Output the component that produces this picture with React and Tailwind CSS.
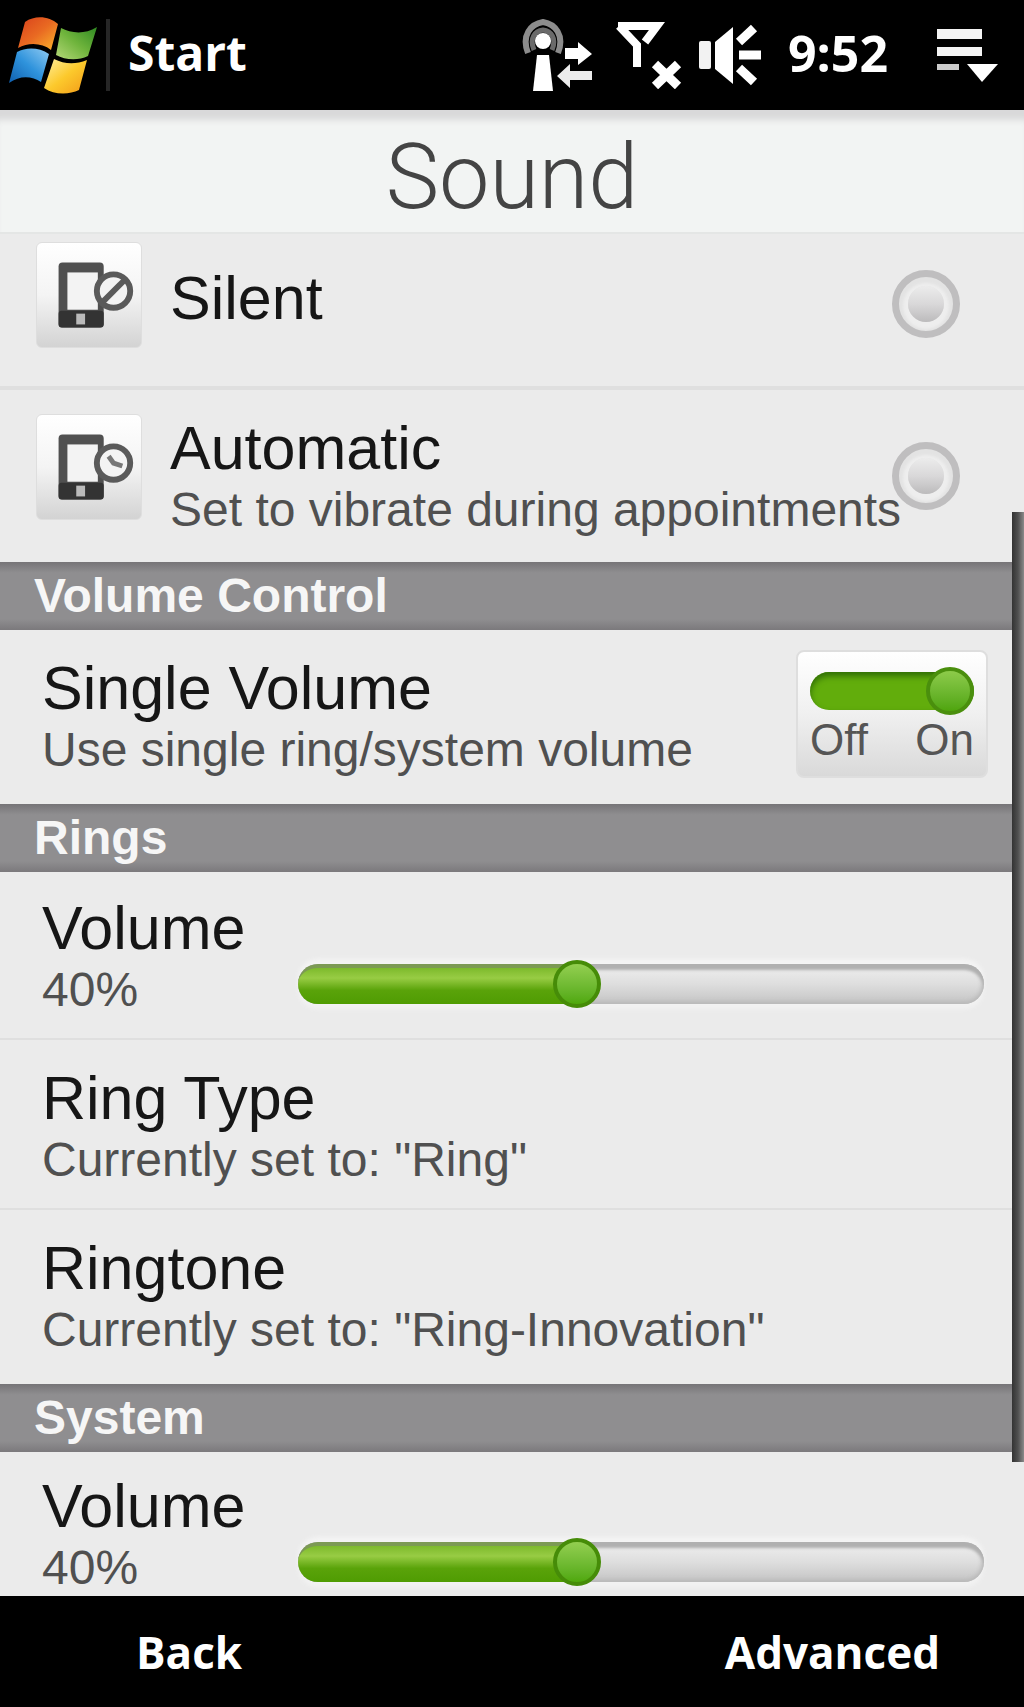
import { useState } from 'react'

function WindowsFlag() {
  return (
    <svg viewBox="0 0 92 84" className="w-[92px] h-[84px]" aria-hidden="true">
      <defs>
        <linearGradient id="flagRed" x1="0" y1="0" x2="1" y2="1">
          <stop offset="0" stopColor="#d8401c" />
          <stop offset="0.5" stopColor="#e96a22" />
          <stop offset="1" stopColor="#fbb62c" />
        </linearGradient>
        <linearGradient id="flagGreen" x1="0" y1="1" x2="1" y2="0">
          <stop offset="0" stopColor="#b5d878" />
          <stop offset="0.5" stopColor="#6fb43c" />
          <stop offset="1" stopColor="#2f8a22" />
        </linearGradient>
        <linearGradient id="flagBlue" x1="1" y1="0" x2="0" y2="1">
          <stop offset="0" stopColor="#8fcaf2" />
          <stop offset="0.5" stopColor="#2f93dc" />
          <stop offset="1" stopColor="#0f5fae" />
        </linearGradient>
        <linearGradient id="flagYellow" x1="0" y1="0" x2="1" y2="1">
          <stop offset="0" stopColor="#fff0a0" />
          <stop offset="0.5" stopColor="#fcc92c" />
          <stop offset="1" stopColor="#f29a18" />
        </linearGradient>
      </defs>
      <path d="M17 9 C27 2 41 3 50 11 L43 37 C34 30 21 29 10 35 Z" fill="url(#flagRed)" />
      <path d="M53 15 C63 20 76 22 89 14 L80 43 C70 48 57 47 48 42 Z" fill="url(#flagGreen)" />
      <path d="M9 39 C18 34 31 34 41 41 L33 69 C24 63 12 62 1 70 Z" fill="url(#flagBlue)" />
      <path d="M46 46 C56 51 67 52 79 47 L71 77 C61 82 46 82 36 75 Z" fill="url(#flagYellow)" />
    </svg>
  )
}

function DataIcon() {
  return (
    <svg viewBox="0 0 72 76" className="w-[72px] h-[76px]" fill="none" aria-hidden="true">
      <path d="M6 36 C-1 18 9 7 21 5 C33 7 43 18 36 36" stroke="#8c8c8c" strokeWidth="6" />
      <path d="M12 33 C7 21 13 14 21 13 C29 14 35 21 30 33" stroke="#6a6a6a" strokeWidth="5" />
      <circle cx="21" cy="24" r="8" fill="#fff" />
      <path d="M15 38 H27 L31 74 H11 Z" fill="#fff" />
      <path d="M43 31 H56 V25 L70 37 L56 48 V42 H43 Z" fill="#fff" />
      <path d="M70 54 H48 V47 L35 59 L48 71 V63 H70 Z" fill="#ececec" />
    </svg>
  )
}

function NoSignalIcon() {
  return (
    <svg viewBox="0 0 68 68" className="w-[68px] h-[68px]" fill="none" stroke="#fff" aria-hidden="true">
      <path d="M4 5 H43 L31 21 M5 5 L23 24 V46" strokeWidth="8" />
      <path d="M41 43 L64 65 M64 43 L41 65" strokeWidth="9" />
    </svg>
  )
}

function SpeakerIcon() {
  return (
    <svg viewBox="0 0 66 62" className="w-[66px] h-[62px]" aria-hidden="true">
      <rect x="1" y="17" width="12" height="28" rx="2" fill="#f2f2f2" />
      <path d="M17 18 L35 3 V60 L17 45 Z" fill="#fff" />
      <path d="M41 18 L56 4 M41 31 H63 M41 44 L56 58" stroke="#fff" strokeWidth="9" />
    </svg>
  )
}

function MenuIcon() {
  return (
    <svg viewBox="0 0 64 54" className="w-16 h-[54px]" aria-hidden="true">
      <rect x="1" y="1" width="45" height="10" fill="#f4f4f4" />
      <rect x="1" y="19" width="45" height="9" fill="#f4f4f4" />
      <rect x="1" y="36" width="22" height="6" fill="#ccc" />
      <path d="M31 36 H62 L46 54 Z" fill="#fff" />
    </svg>
  )
}

function PhoneIcon({ badge }) {
  return (
    <span className="block shrink-0 w-[106px] h-[106px] rounded-md border border-[#dedede] bg-linear-to-b from-white via-[#f4f4f4] to-[#d3d3d3]">
      <svg viewBox="0 0 106 106" className="w-full h-full" fill="none" aria-hidden="true">
        <rect x="22" y="20" width="46" height="66" rx="4" fill="#505050" />
        <rect x="22" y="69" width="46" height="17" rx="3" fill="#333" />
        <rect x="31" y="30" width="31" height="38" fill="#f3f3f3" />
        <rect x="40" y="72" width="9" height="11" fill="#bbb" />
        <circle cx="78" cy="49" r="17" fill="#f3f3f3" stroke="#5a5a5a" strokeWidth="6" />
        {badge === 'blocked' ? (
          <path d="M67 60 L89 38" stroke="#5a5a5a" strokeWidth="6" />
        ) : (
          <path d="M73 42 L78 49 L87 52" stroke="#777" strokeWidth="5" />
        )}
      </svg>
    </span>
  )
}

function RowText({ id, title, detail }) {
  return (
    <span className="block whitespace-nowrap">
      <span id={id} className="block text-[61px] leading-[60px] text-[#161616]">{title}</span>
      {detail && <span className="block text-[48px] leading-[64px] text-[#505050]">{detail}</span>}
    </span>
  )
}

function ProfileRow({ title, detail, badge, checked, onSelect, className }) {
  return (
    <label className={`flex items-start gap-7 h-[172px] pt-6 pl-9 pr-16 ${className}`}>
      <PhoneIcon badge={badge} />
      <span className={`flex-1 min-w-0 ${detail ? 'pt-1' : 'pt-[26px]'}`}>
        <RowText title={title} detail={detail} />
      </span>
      <span className="mt-7 grid place-items-center shrink-0">
        <input
          type="radio"
          name="profile"
          checked={checked}
          onChange={onSelect}
          className="peer col-start-1 row-start-1 appearance-none w-[68px] h-[68px] rounded-full border-[7px] border-[#bfbebf] bg-[#e3e3e3]"
        />
        <span className="col-start-1 row-start-1 w-9 h-9 rounded-full bg-linear-to-b from-[#ececec] via-[#d9d8d9] to-[#bcbbbc] shadow-[0_2px_3px_5px_#eeeeee] pointer-events-none peer-checked:from-[#a5d350] peer-checked:to-[#4f9a06]" />
      </span>
    </label>
  )
}

function SectionHeader({ children }) {
  return (
    <h2 className="py-2.5 pl-[34px] text-[48px] leading-[48px] font-bold text-[#f6f6f6] bg-[linear-gradient(#767477,#8f8e90_16%,#8f8e90_84%,#7b797c)]">
      {children}
    </h2>
  )
}

function ToggleSwitch({ on, onToggle, labelledBy }) {
  return (
    <button
      type="button"
      role="switch"
      aria-checked={on}
      aria-labelledby={labelledBy}
      onClick={onToggle}
      className="shrink-0 w-48 px-3 pt-3.5 pb-3 rounded-lg border-2 border-[#dedede] bg-linear-to-b from-white via-[#f0f0f0] to-[#d9d9d9]"
    >
      <span
        className={`flex items-center h-[38px] my-1.5 rounded-full shadow-[inset_0_4px_6px_#2f6d06] ${
          on ? 'justify-end bg-[#62ad0c]' : 'justify-start bg-[#bbb]'
        }`}
      >
        <span className="w-12 h-12 rounded-full border-4 border-[#4a8f0d] bg-linear-to-b from-[#8dcb4a] to-[#4fa50c]" />
      </span>
      <span className="flex justify-between text-[44px] leading-[48px] text-[#555]">
        <span>Off</span>
        <span>On</span>
      </span>
    </button>
  )
}

function VolumeRow({ id, value, onChange, className }) {
  return (
    <div className={`flex items-end pl-[42px] pr-10 ${className}`}>
      <label htmlFor={id} className="block w-64 shrink-0">
        <RowText title="Volume" detail={`${value}%`} />
      </label>
      <div className="relative flex-1 mb-[18px] h-10 rounded-full bg-linear-to-b from-[#f0f0f0] via-[#dedede] to-[#c4c4c4] shadow-[inset_0_7px_3px_-1px_#b0b0b0,inset_0_0_4px_2px_#b8b8b8,0_-5px_4px_#f4f4f4,0_5px_4px_#f2f2f2]">
        <div
          className="h-full rounded-l-full border-t-4 border-[#7c9a54] bg-[linear-gradient(#7dba2c,#98cc44_28%,#5aa30a_62%,#4f9c02)]"
          style={{ width: `${value}%` }}
        />
        <input
          id={id}
          type="range"
          min="0"
          max="100"
          value={value}
          onChange={(e) => onChange(Number(e.target.value))}
          className="absolute inset-x-0 -top-1 w-full h-12 appearance-none bg-transparent [&::-webkit-slider-thumb]:appearance-none [&::-webkit-slider-thumb]:w-12 [&::-webkit-slider-thumb]:h-12 [&::-webkit-slider-thumb]:rounded-full [&::-webkit-slider-thumb]:border-4 [&::-webkit-slider-thumb]:border-[#468c08] [&::-webkit-slider-thumb]:bg-linear-to-b [&::-webkit-slider-thumb]:from-[#93cf50] [&::-webkit-slider-thumb]:to-[#4fa80a]"
        />
      </div>
    </div>
  )
}

function LinkRow({ title, detail, className }) {
  return (
    <a href="#" className={`block pt-7 pl-[42px] pr-10 ${className}`}>
      <RowText title={title} detail={detail} />
    </a>
  )
}

export default function App() {
  const [profile, setProfile] = useState('normal')
  const [single, setSingle] = useState(true)
  const [ringVolume, setRingVolume] = useState(40)
  const [systemVolume, setSystemVolume] = useState(40)

  return (
    <div className="h-screen flex flex-col bg-[#ebebeb] font-['Liberation_Sans',Arial,sans-serif]">
      <header className="shrink-0 flex items-center h-[110px] pl-2 pr-6 bg-black text-white font-['Open_Sans','Noto_Sans',sans-serif]">
        <button type="button" className="flex items-center">
          <WindowsFlag />
          <span className="w-1 h-[72px] ml-1.5 bg-[#262626]" />
          <span className="ml-[18px] pb-1 text-[48px] leading-[60px] font-bold">Start</span>
        </button>
        <div className="ml-auto flex items-center">
          <DataIcon />
          <span className="ml-5"><NoSignalIcon /></span>
          <span className="ml-4"><SpeakerIcon /></span>
          <span className="ml-6 pb-1 text-[50px] leading-[60px] font-bold">9:52</span>
          <button type="button" aria-label="Menu" className="ml-12">
            <MenuIcon />
          </button>
        </div>
      </header>

      <h1 className="shrink-0 h-[124px] pt-3 text-center text-[90px] leading-[112px] font-light text-[#444] bg-[#f2f4f3] border-b-2 border-[#e4e6e5] shadow-[inset_0_14px_6px_-4px_#d9d9da] font-['Roboto','Liberation_Sans',sans-serif]">
        Sound
      </h1>

      <main className="relative flex-1 min-h-0 overflow-hidden">
        <div className="-mt-4">
          <ProfileRow
            title="Silent"
            badge="blocked"
            checked={profile === 'silent'}
            onSelect={() => setProfile('silent')}
            className="border-b-4 border-[#dfdfdf]"
          />
          <ProfileRow
            title="Automatic"
            detail="Set to vibrate during appointments"
            badge="clock"
            checked={profile === 'automatic'}
            onSelect={() => setProfile('automatic')}
          />

          <SectionHeader>Volume Control</SectionHeader>
          <div className="flex items-start justify-between pt-5 pb-[22px] pl-[42px] pr-9">
            <div className="pt-2">
              <RowText id="single-volume" title="Single Volume" detail="Use single ring/system volume" />
            </div>
            <ToggleSwitch on={single} onToggle={() => setSingle(!single)} labelledBy="single-volume" />
          </div>

          <SectionHeader>Rings</SectionHeader>
          <VolumeRow
            id="ring-volume"
            value={ringVolume}
            onChange={setRingVolume}
            className="pt-[26px] pb-4 border-b-2 border-[#dfdfdf]"
          />
          <LinkRow title="Ring Type" detail={'Currently set to: "Ring"'} className="pb-4 border-b-2 border-[#dfdfdf]" />
          <LinkRow title="Ringtone" detail={'Currently set to: "Ring-Innovation"'} className="pb-[22px]" />

          <SectionHeader>System</SectionHeader>
          <VolumeRow id="system-volume" value={systemVolume} onChange={setSystemVolume} className="pt-6" />
        </div>

        <div className="absolute right-0 top-[278px] w-3 h-[950px] bg-linear-to-r from-[#333] via-[#505050] to-[#8a8a8a]" />
      </main>

      <footer className="shrink-0 flex items-center justify-between h-[111px] pl-[136px] pr-[84px] bg-black text-white text-[44px] font-bold font-['Open_Sans','Noto_Sans',sans-serif]">
        <button type="button">Back</button>
        <button type="button">Advanced</button>
      </footer>
    </div>
  )
}
